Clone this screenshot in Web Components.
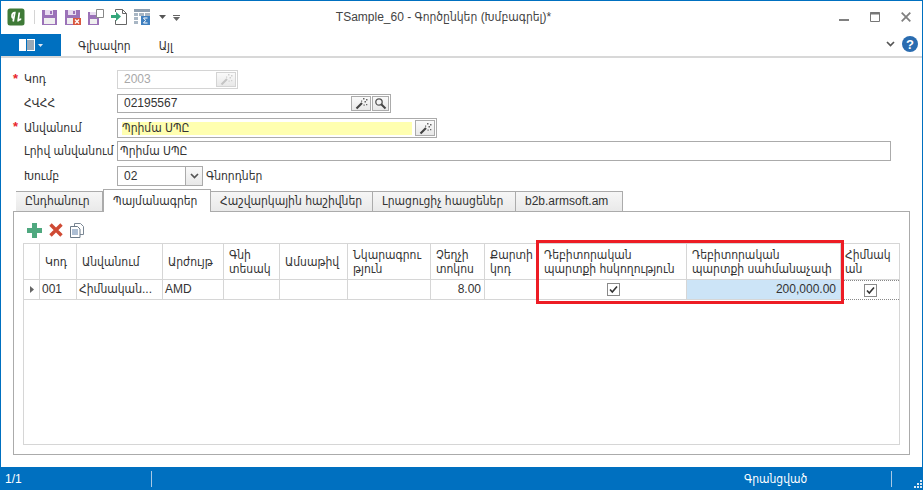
<!doctype html>
<html><head><meta charset="utf-8">
<style>
html,body{margin:0;padding:0;background:#fff}
body{font:12px/15px "Liberation Sans","DejaVu Sans Condensed","DejaVu Sans",sans-serif;color:#333}
</style></head>
<body>
<app-window>
  <title-bar slot="top" caption="TSample_60 - Գործընկեր (Խմբագրել)*"></title-bar>
  <ribbon-bar slot="top"></ribbon-bar>
  <form-panel>
    <form-row label="Կոդ" required w="121" h="19" t="12"><text-box disabled value="2003" wand></text-box></form-row>
    <form-row label="ՀՎՀՀ" w="274" h="19" t="5"><text-box value="02195567" wand search></text-box></form-row>
    <form-row label="Անվանում" required w="320" h="20" t="5"><text-box value="Պրիմա ՍՊԸ" wand yellow></text-box></form-row>
    <form-row label="Լրիվ անվանում" w="774" h="20" t="3"><text-box value="Պրիմա ՍՊԸ"></text-box></form-row>
    <form-row label="Խումբ" w="86" h="20" t="5" after="Գնորդներ"><text-box value="02" combo></text-box></form-row>
  </form-panel>
  <tab-strip active="1" tabs="Ընդհանուր|Պայմանագրեր|Հաշվարկային հաշիվներ|Լրացուցիչ հասցեներ|b2b.armsoft.am" widths="87|108|162|143|107"></tab-strip>
  <tab-pane>
    <grid-toolbar></grid-toolbar>
    <data-grid></data-grid>
  </tab-pane>
  <status-bar slot="bottom"></status-bar>
</app-window>
<script>
function def(name, css, html, init){
  customElements.define(name, class extends HTMLElement{
    constructor(){super();this.attachShadow({mode:'open'});}
    connectedCallback(){
      this.shadowRoot.innerHTML='<style>'+css+'</style>'+(typeof html==='function'?html(this):html);
      if(init)init(this);
    }
  });
}
const wandIcon=(a,b)=>`<svg width="13" height="13" viewBox="0 0 13 13"><path d="M1.500 11.500 7 6" stroke="${a}" stroke-width="2.200" fill="none"/><path d="M8 1h1.500v1.500H8zM11 2h1.500v1.500H11zM9.500 4h1.500v1.500H9.500zM6 3.500h1.200v1.200H6zM11 7h1.300v1.300H11zM8.500 7.500h1.200v1.200H8.500z" fill="${b}"/></svg>`;
const wand=wandIcon('#444','#666');
const wandOff=wandIcon('#c4c4c4','#cfcfcf');
const lens='<svg width="13" height="13" viewBox="0 0 13 13"><circle cx="5" cy="5" r="3.200" stroke="#555" stroke-width="1.300" fill="#f4f4f4"/><path d="M7.500 7.500 11.500 11.500" stroke="#444" stroke-width="2" fill="none"/></svg>';
const chev='<svg width="9" height="6" viewBox="0 0 9 6"><path d="M1 1 4.500 4.500 8 1" stroke="#555" stroke-width="1.700" fill="none"/></svg>';
const check='<svg width="13" height="13" viewBox="0 0 13 13"><rect x=".5" y=".5" width="12" height="12" fill="#fff" stroke="#8a8a8a"/><path d="M3 6.500 5.300 9 10 3.500" stroke="#333" stroke-width="1.600" fill="none"/></svg>';

def('app-window',`
  :host{display:flex;flex-direction:column;width:923px;height:490px;box-sizing:border-box;border:1px solid #0070c0;border-bottom:0;background:#fff;overflow:hidden}
  .main{flex:1;min-height:0;display:flex;flex-direction:column}
`,`<slot name="top"></slot><div class="main"><slot></slot></div><slot name="bottom"></slot>`);

def('title-bar',`
  :host{display:flex;align-items:center;height:32px;position:relative;box-sizing:border-box;padding-left:6px}
  svg{display:block}
  .qa{display:flex;align-items:center}
  .sep{width:1px;height:14px;background:#d4d4d4;margin:0 7px 0 9px}
  .cap{position:absolute;left:0;right:36px;top:9px;text-align:center;font-size:12px;color:#444}
  .win{margin-left:auto;display:flex;align-items:center;gap:21px;padding-right:11px}
`,h=>`
  <div class="qa">
    <svg width="18" height="18" viewBox="0 0 18 18"><rect x=".5" y=".5" width="17" height="17" rx="2.500" fill="#3f7a37"/><path d="M6.200 13.500 7.800 4.500C6 4.500 5 6 5 8c0 1.400.7 2 1.600 2M11 13.500 12.300 4.500M10.800 11.500c1.200 1 2.600.4 3-1" stroke="#fff" stroke-width="1.700" fill="none"/></svg>
    <div class="sep"></div>
    <svg width="15" height="16" viewBox="0 0 15 16" style="margin-right:8px"><path d="M0 1h15v15H0z" fill="#9b72b8"/><path d="M3 1h8v5H3z" fill="#e8dcf0"/><path d="M8 2h2v3H8z" fill="#9b72b8"/><path d="M2 9h11v6H2z" fill="#efefef"/></svg>
    <svg width="16" height="16" viewBox="0 0 16 16" style="margin-right:7px"><path d="M0 1h15v15H0z" fill="#9b72b8"/><path d="M3 1h8v5H3z" fill="#e8dcf0"/><path d="M8 2h2v3H8z" fill="#9b72b8"/><path d="M2 9h11v6H2z" fill="#efefef"/><path d="M8 9h8v7H8z" fill="#d9573f"/><path d="M10 10.500 14 14.500M14 10.500 10 14.500" stroke="#fff" stroke-width="1.300"/></svg>
    <svg width="16" height="16" viewBox="0 0 16 16" style="margin-right:7px"><path d="M0 3h11v13H0z" fill="#9b72b8"/><path d="M2 3h6v3H2z" fill="#e8dcf0"/><path d="M2 10h7v5H2z" fill="#efefef"/><path d="M8.500.5h7v8h-7z" fill="#fff" stroke="#888"/></svg>
    <svg width="16" height="16" viewBox="0 0 16 16" style="margin-right:7px"><path d="M4.500 3V.5h7l4 4v11h-11V11" fill="#fff" stroke="#666"/><path d="M11.500.5v4h4" fill="none" stroke="#666"/><path d="M0 6h5V3l5 4.500L5 12V9H0z" fill="#35a77c"/></svg>
    <svg width="16" height="16" viewBox="0 0 16 16" style="margin-right:6px"><path d="M0 0h16v3H0z" fill="#8f9fb0"/><path d="M0 4h4v3H0zM5 4h5v3H5zM11 4h5v3h-5zM0 8h4v3H0zM0 12h4v3H0z" fill="#a8b6c4"/><path d="M7 7h9v9H7z" fill="#3f7fbf"/><path d="M13.500 9H9.500l2 2.500-2 2.500h4" stroke="#fff" fill="none"/></svg>
    <svg width="7" height="4" viewBox="0 0 7 4" style="margin:0 7px 0 3px"><path d="M0 0h7L3.500 4z" fill="#555"/></svg>
    <svg width="7" height="6" viewBox="0 0 7 6" style="margin-top:2px"><path d="M0 0h7v1H0zM0 2h7L3.500 6z" fill="#666"/></svg>
  </div>
  <div class="cap">${h.getAttribute('caption')}</div>
  <div class="win">
    <svg width="10" height="10" viewBox="0 0 10 10"><path d="M0 8h10" stroke="#808080" stroke-width="2"/></svg>
    <svg width="10" height="10" viewBox="0 0 10 10"><path d="M.5.500h9v9h-9z" fill="none" stroke="#777"/><path d="M0 1.500h10" stroke="#777" stroke-width="2"/></svg>
    <svg width="10" height="10" viewBox="0 0 10 10"><path d="M.7.700 9.300 9.300M9.300.700.7 9.300" stroke="#808080" stroke-width="1.800"/></svg>
  </div>`);

def('ribbon-bar',`
  :host{display:flex;height:24px;box-sizing:border-box;border-bottom:2px solid #d8d8d8;margin-top:1px;align-items:stretch}
  .file{width:60px;height:22px;background:#0070c0;display:flex;align-items:center;justify-content:center;gap:3px;box-sizing:border-box}
  .t{line-height:15px;margin-top:5px}
  .a{margin-left:17px}.b{margin-left:28px}
  .end{margin-left:auto;display:flex;align-items:center;gap:7px;padding:0 4px 2px 0}
  svg{display:block}
`,`<div class="file">
    <svg width="16" height="12" viewBox="0 0 16 12"><path d="M0 0h16v12H0z" fill="#fff"/><path d="M8 1h7v10H8z" fill="#9aa9b6"/><path d="M7.500 0v12" stroke="#0070c0"/></svg>
    <svg width="5" height="3" viewBox="0 0 5 3"><path d="M0 0h5L2.500 3z" fill="#dfe8f2"/></svg>
  </div>
  <div class="t a">Գլխավոր</div><div class="t b">Այլ</div>
  <div class="end">${chev}
    <svg width="16" height="16" viewBox="0 0 16 16"><circle cx="8" cy="8" r="8" fill="#2a6cb0"/><text x="8" y="12.500" text-anchor="middle" fill="#fff" font-family="Liberation Sans" font-weight="700" font-size="13">?</text></svg>
  </div>`);

def('form-panel',`:host{display:block}`,`<slot></slot>`);

def('form-row',`
  :host{display:flex;align-items:center;position:relative;box-sizing:border-box}
  .star{position:absolute;left:12px;top:1px;color:#e8262c;font-size:13px;font-weight:700}
  .l{width:93px;margin-left:23px;box-sizing:border-box;white-space:nowrap}
  .f{display:block;box-sizing:border-box}
  .after{margin-left:3px}
`,h=>{
  const g=n=>h.getAttribute(n);
  h.style.marginTop=g('t')+'px';h.style.height=g('h')+'px';
  return `${h.hasAttribute('required')?'<span class="star">*</span>':''}<div class="l">${g('label')}</div>
  <div class="f" style="width:${g('w')}px;height:${g('h')}px"><slot></slot></div>${g('after')?`<div class="after">${g('after')}</div>`:''}`;
});

def('text-box',`
  :host{display:flex;align-items:center;height:100%;box-sizing:border-box;border:1px solid #ababab;background:#fff;padding:1px;gap:1px}
  :host([disabled]){border-color:#d4d4d4;color:#a8a8a8}
  .v{flex:1;min-width:0;padding-left:5px;white-space:nowrap}
  :host([yellow]) .v{background:#ffffb0;padding-left:0;margin:1px 2px 1px 3px;height:13px;line-height:13px}
  :host(:not([yellow]):not([wand]):not([combo])) .v{padding-left:1px}
  .b{width:20px;height:15px;box-sizing:border-box;border:1px solid #ababab;background:linear-gradient(#fafafa,#e8e8e8);display:flex;align-items:center;justify-content:center}
  :host([disabled]) .b{border-color:#d4d4d4}
  :host([yellow]) .b{height:16px}
  .b.s{width:17px}
  :host([combo]){padding-right:0}
  :host([combo]) .b{width:17px;height:18px;border-width:0 0 0 1px}
`,h=>{
  const has=n=>h.hasAttribute(n);
  return `<div class="v">${h.getAttribute('value')}</div>${has('wand')?`<div class="b">${has('disabled')?wandOff:wand}</div>`:''}${has('search')?`<div class="b s">${lens}</div>`:''}${has('combo')?`<div class="b">${chev}</div>`:''}`;
});

def('tab-strip',`
  :host{display:flex;align-items:flex-end;height:23px;margin-top:3px;padding-left:15px;box-sizing:border-box;position:relative;z-index:1}
  .t{box-sizing:border-box;height:20px;border:1px solid #ababab;border-bottom:0;border-left:0;background:linear-gradient(#f6f6f6,#e9e9e9);display:flex;align-items:center;padding-left:9px;white-space:nowrap;margin-bottom:1px}
  .t:first-child{border-left:1px solid #ababab}
  .t.on{height:23px;background:#fff;border-left:1px solid #ababab;padding-left:9px;margin-bottom:0}
`,h=>{
  const ts=h.getAttribute('tabs').split('|'),ws=h.getAttribute('widths').split('|'),a=+h.getAttribute('active');
  return ts.map((t,i)=>`<div class="t${i===a?' on':''}" style="width:${ws[i]}px">${t}</div>`).join('');
});

def('tab-pane',`
  :host{display:flex;flex-direction:column;box-sizing:border-box;width:897px;height:244px;margin:-1px 0 0 12px;border:1px solid #ababab;padding:0 9px 9px 9px;background:#fff}
`,`<slot></slot>`);

def('grid-toolbar',`
  :host{display:flex;align-items:center;height:31px;box-sizing:border-box;gap:7px;padding:5px 0 0 4px}
  svg{display:block}
`,`<svg width="15" height="15" viewBox="0 0 15 15"><path d="M5 0h5v5h5v5h-5v5H5v-5H0V5h5z" fill="#4fa87f"/></svg>
<svg width="14" height="14" viewBox="0 0 14 14"><path d="M1.500 1.500 12.500 12.500M12.500 1.500 1.500 12.500" stroke="#cf4a34" stroke-width="3.400"/></svg>
<svg width="14" height="15" viewBox="0 0 14 15"><path d="M4.500.5h6l3 3v8h-9z" fill="#fff" stroke="#7a8794"/><path d="M.5 3.500h7l2.500 2.500v8.500H.5z" fill="#fff" stroke="#6c7a88"/><path d="M2 7h6M2 9h6M2 11h6" stroke="#5d7ea8"/></svg>`);

def('data-grid',`
  :host{display:block;flex:1;min-height:0;box-sizing:border-box;border:1px solid #d6d6d6;position:relative;background:#fff}
  .g{display:grid;grid-template-columns:16px 37px 86px 61px 56px 68px 83px 54px 53px 149px 154px 58px;grid-template-rows:36px 20px}
  .c{box-sizing:border-box;border-right:1px solid #d6d6d6;border-bottom:1px solid #d6d6d6;padding:0 2px;display:flex;align-items:center;white-space:nowrap;overflow:hidden}
  .c:nth-child(12n){border-right:0}
  .h{padding-left:5px;line-height:14px;white-space:pre}
  .h.p6{padding-left:6px}
  .r{justify-content:flex-end;padding-right:3px}
  .r.sel{padding-right:4px}
  .m{justify-content:center}
  .m.shift svg{margin-left:2px}
  .sel{background:#cce4f7}
  .last{border:1px dotted #888}
  .c.h.over{padding-left:4px;padding-right:0}
  .hl{position:absolute;left:512px;top:-4px;width:308px;height:64px;box-sizing:border-box;border:3px solid #ed1c24;pointer-events:none}
`,()=>{
  const heads=['','Կոդ','Անվանում','Արժույթ','Գնի\nտեսակ','Ամսաթիվ','Նկարագրու\nթյուն','Չեղչի\nտոկոս','Քարտի\nկոդ','Դեբիտորական\nպարտքի հսկողություն','Դեբիտորական\nպարտքի սահմանաչափ','Հիմնակ\nան'];
  const h=heads.map((t,i)=>`<div class="c h${i===11?' over':''}${i===9?' p6':''}"><span>${t}</span></div>`).join('');
  const row=`<div class="c m"><svg width="4" height="7" viewBox="0 0 4 7"><path d="M0 0l4 3.500L0 7z" fill="#666"/></svg></div>
  <div class="c">001</div><div class="c">Հիմնական...</div><div class="c">AMD</div><div class="c"></div><div class="c"></div><div class="c"></div>
  <div class="c r">8.00</div><div class="c"></div><div class="c m shift">${check}</div><div class="c r sel">200,000.00</div><div class="c m last">${check}</div>`;
  return `<div class="g">${h}${row}</div><div class="hl"></div>`;
});

def('status-bar',`
  :host{display:flex;align-items:center;height:23px;background:#0070c0;color:#fff;margin:0 -1px;position:relative}
  .a{width:152px;box-sizing:border-box;padding-left:5px;height:16px;border-right:1px solid #a8c8e4;line-height:16px}
  .b{margin-left:592px;width:147px;height:16px;line-height:16px;border-right:1px solid #a8c8e4}
  .g{position:absolute;right:1px;bottom:1px}
`,`<div class="a">1/1</div><div class="b">Գրանցված</div>
<svg class="g" width="9" height="9" viewBox="0 0 9 9"><path d="M7 0h2v2H7zM4 3h2v2H4zM7 3h2v2H7zM1 6h2v2H1zM4 6h2v2H4zM7 6h2v2H7z" fill="#dce9f4"/></svg>`);
</script>
</body></html>
